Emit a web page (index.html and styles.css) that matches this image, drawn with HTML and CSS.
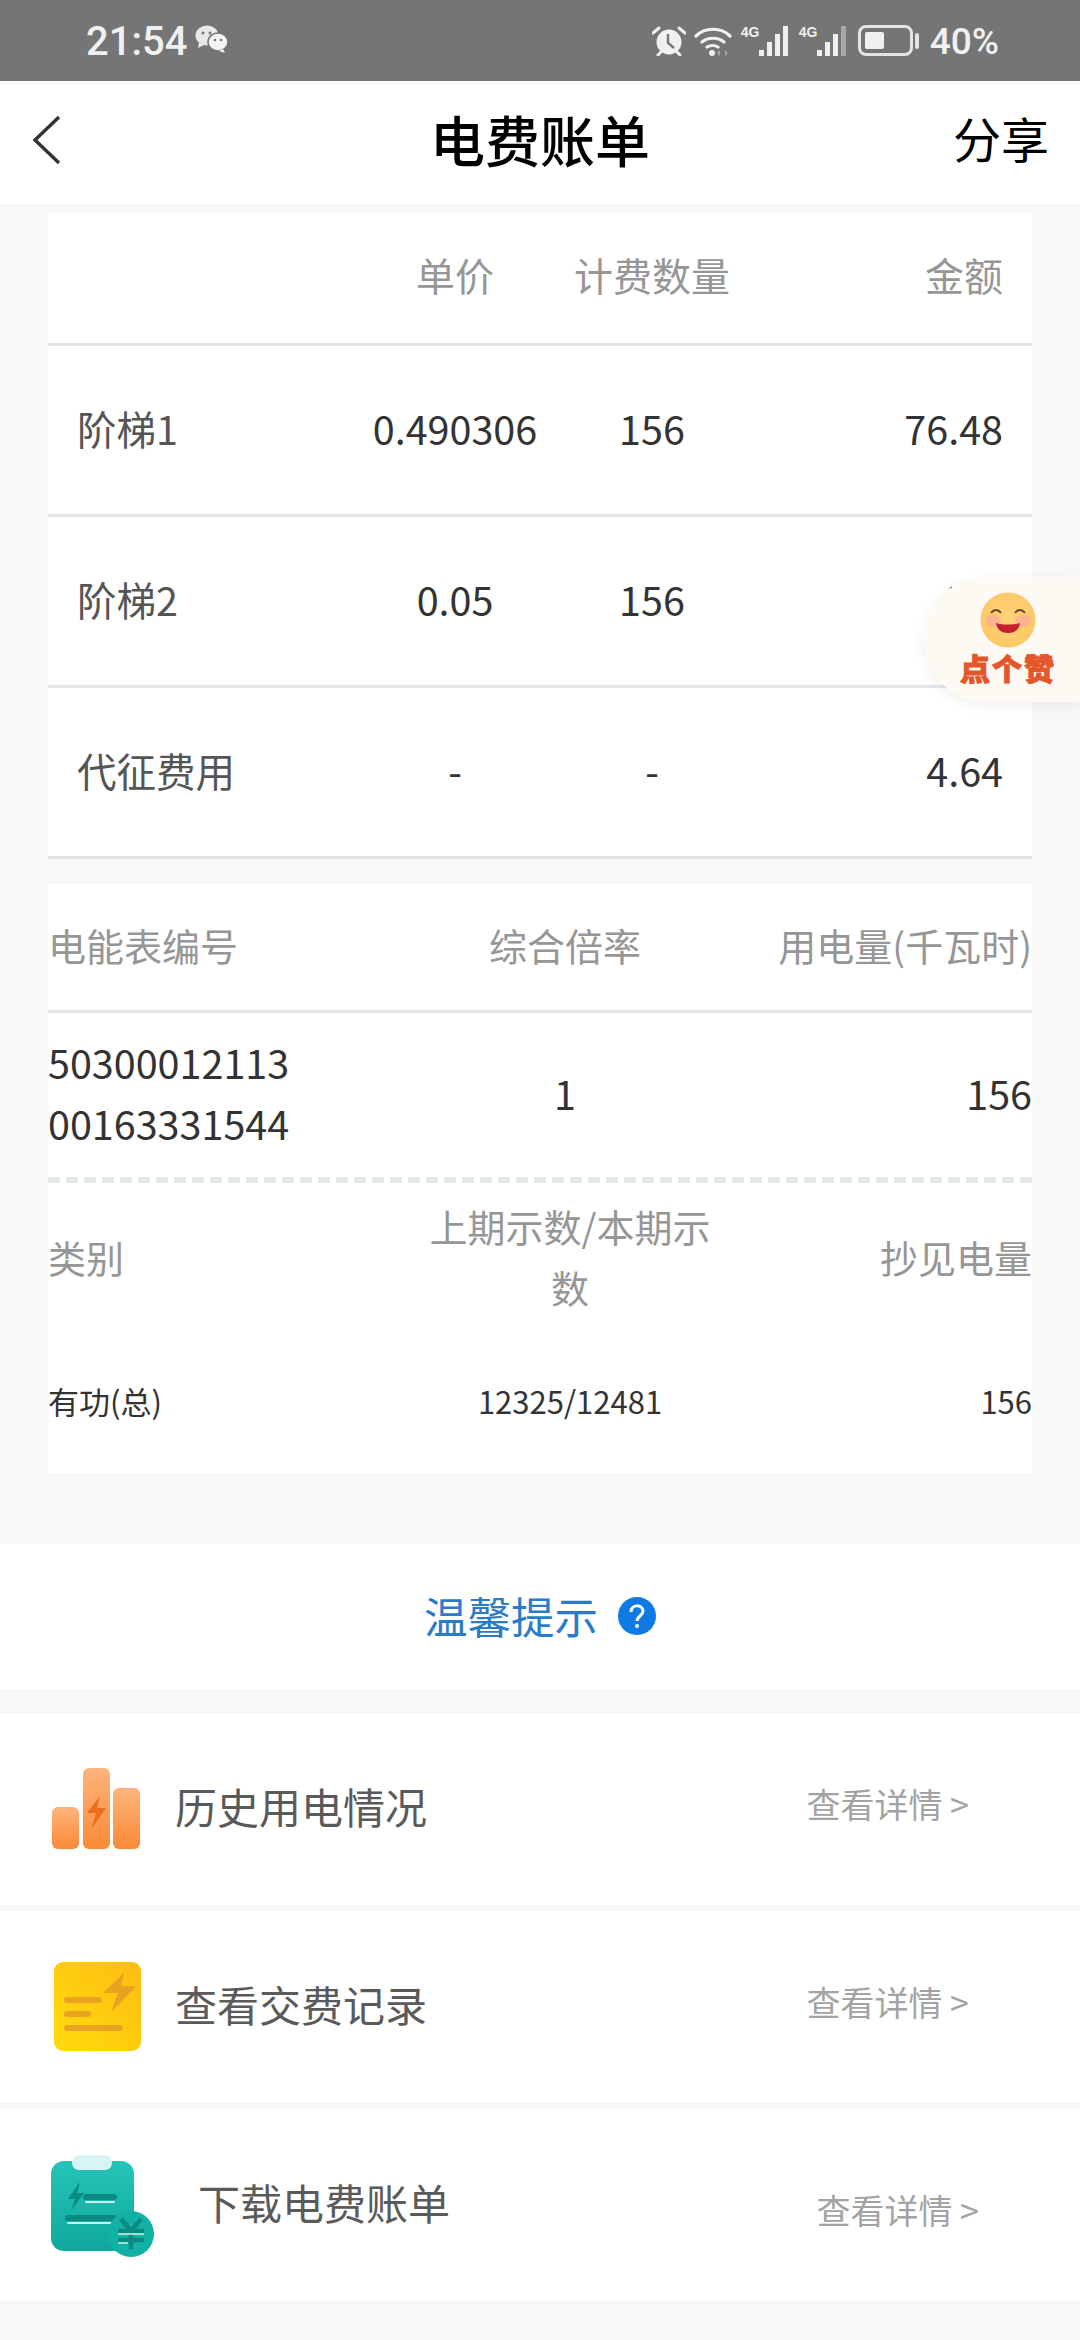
FILE: index.html
```html
<!DOCTYPE html>
<html lang="zh-CN">
<head>
  <meta charset="UTF-8">
  <link rel="stylesheet" href="styles.css">
</head>
<body>
  <div id="status-bar">
    <span class="clock">21:54</span>
    <svg class="wechat" width="34" height="28" viewBox="0 0 34 28">
      <ellipse cx="12" cy="10.5" rx="11.5" ry="10" fill="#e8e8e8"/>
      <path d="M4 17l-1 6 6-3z" fill="#e8e8e8"/>
      <ellipse cx="23" cy="17" rx="10" ry="9" fill="#f4f4f4" stroke="#757575" stroke-width="1.5"/>
      <path d="M28 24l2 4-6-2z" fill="#f4f4f4"/>
      <circle cx="8" cy="8" r="1.5" fill="#757575"/>
      <circle cx="15" cy="8" r="1.5" fill="#757575"/>
      <circle cx="20" cy="15" r="1.3" fill="#757575"/>
      <circle cx="26" cy="15" r="1.3" fill="#757575"/>
    </svg>
    <div class="status-right">
      <svg width="34" height="30" viewBox="0 0 34 30">
        <circle cx="17" cy="16" r="12.5" fill="#f0f0f0"/>
        <path d="M16 8v9l6 5" fill="none" stroke="#757575" stroke-width="2.4"/>
        <path d="M1 7l6-5M33 7l-6-5M6 29l3-3M28 29l-3-3" stroke="#f0f0f0" stroke-width="3" stroke-linecap="round"/>
      </svg>
      <svg class="wifi" width="38" height="30" viewBox="0 0 38 30">
        <path d="M2 10c9-9 25-9 34 0M8 16c6-5 16-5 22 0M13 21c3-2 8-2 11 0" fill="none" stroke="#f0f0f0" stroke-width="3.2" stroke-linecap="round"/>
        <circle cx="18" cy="27" r="3" fill="#f0f0f0"/>
        <path d="M26 24v6l-3-3zM31 24v6l3-3z" fill="#a8a8a8"/>
      </svg>
      <div class="signal">
        <span class="net">4G</span>
        <i class="bar b1"></i><i class="bar b2"></i><i class="bar b3"></i><i class="bar b4"></i>
      </div>
      <div class="signal">
        <span class="net">4G</span>
        <i class="bar b1"></i><i class="bar b2"></i><i class="bar b3"></i><i class="bar b4 dim"></i>
      </div>
      <div class="battery"><div class="battery-fill"></div></div>
      <div class="battery-nub"></div>
      <span class="percent">40%</span>
    </div>
  </div>

  <div id="header">
    <svg class="back" width="30" height="50" viewBox="0 0 30 50">
      <path d="M27 2L3 25l24 23" fill="none" stroke="#333" stroke-width="3.4"/>
    </svg>
    <span class="title">电费账单</span>
    <span class="share">分享</span>
  </div>

  <div id="page">
    <div class="card fees">
      <div class="fee-row fee-head">
        <span></span><span class="mid">单价</span><span class="mid">计费数量</span><span class="end">金额</span>
      </div>
      <div class="fee-row">
        <span class="name">阶梯1</span><span class="mid">0.490306</span><span class="mid">156</span><span class="end">76.48</span>
      </div>
      <div class="fee-row">
        <span class="name">阶梯2</span><span class="mid">0.05</span><span class="mid">156</span><span class="end">7.8</span>
      </div>
      <div class="fee-row">
        <span class="name">代征费用</span><span class="mid">-</span><span class="mid">-</span><span class="end">4.64</span>
      </div>
    </div>

    <div class="card meter">
      <div class="meter-row meter-head">
        <span>电能表编号</span><span class="mid">综合倍率</span><span class="end">用电量(千瓦时)</span>
      </div>
      <div class="meter-row meter-body">
        <span class="meter-no">50300012113 00163331544</span><span class="mid">1</span><span class="end">156</span>
      </div>
      <div class="read-row read-head">
        <span>类别</span><span class="mid">上期示数/本期示数</span><span class="end">抄见电量</span>
      </div>
      <div class="read-row read-body">
        <span>有功(总)</span><span class="mid">12325/12481</span><span class="end">156</span>
      </div>
    </div>

    <div class="tip">
      <span>温馨提示</span>
      <svg width="38" height="38" viewBox="0 0 38 38">
        <circle cx="19" cy="19" r="19" fill="#0f7ae5"/>
        <path d="M13 15c0-8 12-8 12-1 0 5-6 5-6 10" fill="none" stroke="#fff" stroke-width="3"/>
        <circle cx="19" cy="29" r="2" fill="#fff"/>
      </svg>
    </div>

    <div class="link-row link-one">
      <svg class="link-icon" width="96" height="96" viewBox="0 0 96 96">
        <defs>
          <linearGradient id="bar-grad" x1="0" y1="0" x2="0" y2="1">
            <stop offset="0" stop-color="#fdb47c"/>
            <stop offset="1" stop-color="#fb8a36"/>
          </linearGradient>
        </defs>
        <rect x="4" y="48" width="27" height="42" rx="6" fill="url(#bar-grad)"/>
        <rect x="35" y="9" width="27" height="81" rx="6" fill="url(#bar-grad)"/>
        <rect x="65" y="29" width="27" height="61" rx="6" fill="url(#bar-grad)"/>
        <path d="M52 37L39 54h9l-4 15 14-20h-9z" fill="#e96f1c"/>
      </svg>
      <span class="link-name">历史用电情况</span>
      <span class="link-more">查看详情 &gt;</span>
    </div>

    <div class="link-row link-two">
      <svg class="link-icon" width="96" height="96" viewBox="0 0 96 96">
        <defs>
          <linearGradient id="note-grad" x1="0" y1="1" x2="1" y2="0">
            <stop offset="0" stop-color="#ffdc0a"/>
            <stop offset="1" stop-color="#fdbc14"/>
          </linearGradient>
        </defs>
        <rect x="6" y="3" width="87" height="89" rx="9" fill="url(#note-grad)"/>
        <path d="M19 41h32M19 55h21M19 69h53" stroke="#eaa221" stroke-width="6" stroke-linecap="round"/>
        <path d="M76 14L55 34h15l-7 19 26-26H73z" fill="#eaa221"/>
      </svg>
      <span class="link-name">查看交费记录</span>
      <span class="link-more">查看详情 &gt;</span>
    </div>

    <div class="link-row link-three">
      <svg class="link-icon" width="112" height="108" viewBox="0 0 112 108">
        <defs>
          <linearGradient id="clip-grad" x1="0" y1="0" x2="0" y2="1">
            <stop offset="0" stop-color="#25c4b8"/>
            <stop offset="1" stop-color="#0fa89e"/>
          </linearGradient>
        </defs>
        <rect x="3" y="8" width="83" height="90" rx="13" fill="url(#clip-grad)"/>
        <rect x="24" y="2" width="40" height="15" rx="7" fill="#d6f5f3"/>
        <path d="M32 29L20 46h7l-4 12 13-18h-7z" fill="#0b8a82"/>
        <path d="M38 44h28" stroke="#0b8a82" stroke-width="6" stroke-linecap="round"/>
        <path d="M38 49h28M20 70h46" stroke="#c8f5f0" stroke-width="2" stroke-linecap="round"/>
        <path d="M20 65h46" stroke="#0b8a82" stroke-width="6" stroke-linecap="round"/>
        <circle cx="83" cy="81" r="23" fill="#13b0a5"/>
        <path d="M73 66l10 12 10-12M70 78h26M70 87h26M83 78v18" fill="none" stroke="#0b8a82" stroke-width="4.5"/>
        <path d="M70 81h26M70 90h10" stroke="#c8f5f0" stroke-width="1.5"/>
      </svg>
      <span class="link-name">下载电费账单</span>
      <span class="link-more">查看详情 &gt;</span>
    </div>
  </div>

  <div class="like-pill">
    <svg width="56" height="56" viewBox="0 0 56 56">
      <defs>
        <radialGradient id="face-grad" cx="0.5" cy="0.45" r="0.6">
          <stop offset="0" stop-color="#ffd27a"/>
          <stop offset="1" stop-color="#fdc763"/>
        </radialGradient>
      </defs>
      <circle cx="28" cy="28" r="27.5" fill="url(#face-grad)"/>
      <ellipse cx="13" cy="29" rx="8" ry="6" fill="#fbb38e"/>
      <ellipse cx="43" cy="29" rx="8" ry="6" fill="#fbb38e"/>
      <path d="M11 21c3-4 7-4 10 0M35 21c3-4 7-4 10 0" fill="none" stroke="#6b4a32" stroke-width="2"/>
      <path d="M16 31c6 2 18 2 24 0-1 7-6 10-12 10s-11-3-12-10z" fill="#c4202e"/>
    </svg>
    <span class="like-text">点个赞</span>
  </div>
</body>
</html>
```

FILE: styles.css
```css
html, body {
  margin: 0;
  width: 1080px;
  height: 2340px;
  overflow: hidden;
  background: #f8f8f8;
  font-family: "Noto Sans CJK SC", Roboto, sans-serif;
  color: #333;
}

#status-bar {
  height: 81px;
  background: #757575;
  color: #f0f0f0;
  display: flex;
  align-items: center;
  padding: 0 81px 0 86px;
  box-sizing: border-box;
}

.clock {
  font-family: Roboto, sans-serif;
  font-size: 40px;
  font-weight: 500;
  margin-right: 8px;
  padding-top: 2px;
}

.wechat {
  margin-top: -4px;
}

.status-right {
  margin-left: auto;
  display: flex;
  align-items: center;
}

.wifi {
  margin-left: 8px;
}

.signal {
  display: flex;
  align-items: flex-end;
  gap: 3px;
  height: 30px;
  margin-left: 9px;
  position: relative;
  padding-left: 18px;
}

.signal + .signal {
  margin-left: 11px;
}

.net {
  position: absolute;
  left: 0;
  top: -1px;
  font-family: "Liberation Sans", sans-serif;
  font-size: 14px;
  font-weight: bold;
  line-height: 15px;
}

.bar {
  width: 5px;
  background: #f0f0f0;
  display: block;
}

.b1 { height: 6px; }
.b2 { height: 14px; }
.b3 { height: 22px; }
.b4 { height: 30px; }
.dim { background: #a8a8a8; }

.battery {
  margin-left: 12px;
  width: 55px;
  height: 31px;
  box-sizing: border-box;
  border: 3px solid #e4e4e4;
  border-radius: 8px;
  padding: 4px;
}

.battery-fill {
  width: 19px;
  height: 100%;
  background: #f0f0f0;
  border-radius: 2px;
}

.battery-nub {
  width: 4px;
  height: 16px;
  background: #e4e4e4;
  border-radius: 2px;
  margin-left: 2px;
}

.percent {
  font-family: Roboto, sans-serif;
  font-size: 37px;
  font-weight: 500;
  margin-left: 11px;
  padding-top: 2px;
}

#header {
  height: 123px;
  background: #fff;
  position: relative;
  display: flex;
  align-items: center;
  justify-content: center;
}

.back {
  position: absolute;
  left: 32px;
  top: 34px;
}

.title {
  font-size: 55px;
  font-weight: 500;
  color: #000;
  padding-bottom: 10px;
}

.share {
  position: absolute;
  right: 31px;
  top: 26px;
  font-size: 48px;
  line-height: 60px;
  color: #000;
}

#page {
  padding-top: 9px;
}

.card {
  margin: 0 48px;
  background: #fff;
}

.mid {
  text-align: center;
}

.end {
  text-align: right;
}

.fee-row {
  display: grid;
  grid-template-columns: 310px 194px 200px 1fr;
  align-items: center;
  height: 171px;
  padding: 0 29px 6px 0;
  font-size: 39.5px;
  border-bottom: 3px solid #e0e5e9;
  box-sizing: border-box;
}

.fee-head {
  height: 133px;
  padding-bottom: 8px;
  font-size: 39px;
  color: #969696;
}

.name {
  padding-left: 29px;
  color: #555;
}

.meter {
  margin-top: 25px;
  font-size: 38px;
}

.meter-row {
  display: grid;
  grid-template-columns: 417px 200px 1fr;
  align-items: center;
}

.meter-head {
  height: 129px;
  padding-bottom: 5px;
  color: #969696;
  border-bottom: 3px solid #e0e5e9;
  box-sizing: border-box;
}

.meter-body {
  height: 170px;
  padding-bottom: 12px;
  font-size: 39.5px;
  background: repeating-linear-gradient(90deg, #e2e7e9 0 12px, transparent 12px 18px) bottom / 100% 6px no-repeat;
  box-sizing: border-box;
}

.meter-no {
  line-height: 61px;
  width: 260px;
}

.read-row {
  display: grid;
  grid-template-columns: 367px 310px 1fr;
  align-items: center;
}

.read-head {
  height: 150px;
  padding-bottom: 4px;
  color: #969696;
  line-height: 61px;
  box-sizing: border-box;
}

.read-body {
  height: 140px;
  padding-bottom: 5px;
  font-size: 31px;
  box-sizing: border-box;
}

.tip {
  margin-top: 71px;
  height: 145px;
  background: #fff;
  display: flex;
  align-items: center;
  justify-content: center;
  gap: 20px;
  font-size: 43.5px;
  color: #2a7cc9;
  padding-bottom: 2px;
  box-sizing: border-box;
}

.link-row {
  background: #fff;
  display: flex;
  align-items: center;
  height: 192px;
  padding-left: 48px;
  margin-top: 6px;
}

.link-one {
  margin-top: 24px;
}

.link-one .link-icon {
  margin-bottom: 4px;
}

.link-name {
  font-size: 42px;
  color: #5a5a5a;
  margin-left: 31px;
  margin-bottom: 8px;
}

.link-more {
  font-size: 34px;
  color: #a3a3a3;
  margin-left: auto;
  margin-right: 111px;
  margin-bottom: 12px;
}

.link-three .link-icon {
  margin-top: 4px;
}

.link-three .link-name {
  margin-left: 38px;
}

.link-three .link-more {
  margin-right: 101px;
  margin-bottom: 0;
  margin-top: 8px;
}

.like-pill {
  position: absolute;
  left: 924px;
  top: 577px;
  width: 156px;
  height: 125px;
  border-radius: 62px 0 0 62px;
  background: #fdfaf4;
  box-shadow: 0 4px 14px rgba(0, 0, 0, 0.06);
  display: flex;
  flex-direction: column;
  align-items: center;
  padding: 15px 0 0 12px;
  box-sizing: border-box;
}

.like-text {
  font-size: 30px;
  line-height: 32px;
  font-weight: 900;
  letter-spacing: 2px;
  white-space: nowrap;
  -webkit-text-stroke: 1px #e4572a;
  color: #e4572a;
  margin-top: 3px;
}
```
